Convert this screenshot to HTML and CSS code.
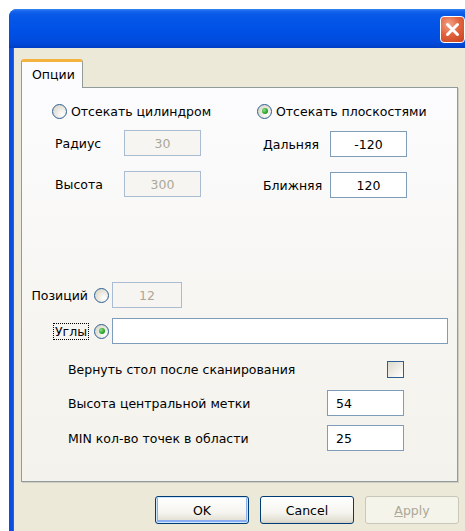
FILE: index.html
```html
<!DOCTYPE html>
<html lang="ru">
<head>
<meta charset="utf-8">
<title>Опции</title>
<link rel="stylesheet" href="styles.css">
</head>
<body>
<div class="window">
  <div class="titlebar">
    <div class="close-btn">
      <svg width="17" height="17" viewBox="0 0 17 17"><path d="M3.5 3.5 L13.5 13.5 M13.5 3.5 L3.5 13.5" stroke="#fff" stroke-width="3" stroke-linecap="round"/></svg>
    </div>
  </div>
  <div class="frame">
    <div class="tabs"><div class="tab">Опции</div></div>
    <div class="panel">
      <div class="clip">
        <div class="clip-col">
          <label class="radio-row"><span class="radio"></span>Отсекать цилиндром</label>
          <div class="field-row left-row"><span class="flabel">Радиус</span><span class="edit disabled center">30</span></div>
          <div class="field-row left-row"><span class="flabel">Высота</span><span class="edit disabled center">300</span></div>
        </div>
        <div class="clip-col">
          <label class="radio-row"><span class="radio checked"></span>Отсекать плоскостями</label>
          <div class="field-row right-row"><span class="flabel">Дальняя</span><span class="edit center">-120</span></div>
          <div class="field-row right-row"><span class="flabel">Ближняя</span><span class="edit center">120</span></div>
        </div>
      </div>

      <div class="mode">
        <span class="mlabel">Позиций</span><span class="radio"></span><span class="edit disabled center short">12</span>
        <span class="mlabel"><span class="focus">Углы</span></span><span class="radio checked"></span><span class="edit wide"></span>
      </div>

      <div class="opts">
        <div class="opt-row"><span>Вернуть стол после сканирования</span><span class="check"></span></div>
        <div class="opt-row"><span>Высота центральной метки</span><span class="edit num">54</span></div>
        <div class="opt-row"><span>MIN кол-во точек в области</span><span class="edit num">25</span></div>
      </div>
    </div>
    <div class="buttons">
      <button class="btn default">OK</button>
      <button class="btn">Cancel</button>
      <button class="btn off"><u>A</u>pply</button>
    </div>
  </div>
</div>
</body>
</html>
```

FILE: styles.css
```css
html, body {
  margin: 0;
  padding: 0;
  width: 465px;
  height: 531px;
  overflow: hidden;
  background: #ffffff;
  font-family: "DejaVu Sans", Verdana, sans-serif;
  font-size: 12.5px;
  color: #000;
}

.window {
  margin: 9px 0 0 9px;
  width: 472px;
  height: 540px;
  border-radius: 8px 8px 0 0;
  background: #0a4fe0;
  display: flex;
  flex-direction: column;
  overflow: hidden;
}

.titlebar {
  height: 39px;
  flex: none;
  position: relative;
  background: linear-gradient(to bottom,
    #3a86f2 0px, #1766ee 2px, #0a5ae6 5px, #0456e8 10px,
    #0050e6 22px, #004bdd 32px, #0046d4 36px, #003dc2 39px);
}

.close-btn {
  position: absolute;
  left: 431px;
  top: 7px;
  width: 25px;
  height: 27px;
  box-sizing: border-box;
  border: 1px solid #ffffff;
  border-radius: 4px;
  background: radial-gradient(circle at 35% 30%, #f2a489 0%, #e2643f 45%, #c63f1e 100%);
  display: flex;
  align-items: center;
  justify-content: center;
}

.frame {
  flex: 1;
  background: #ece9d8;
  border-left: 4px solid #0a4fe0;
  box-shadow: inset 1px 0 0 #1d63e6;
  padding: 11px 0 0 8px;
}

.tabs {
  display: flex;
  height: 28px;
}

.tab {
  width: 62px;
  box-sizing: border-box;
  border: 1px solid #919b9c;
  border-top: 3px solid #f4b33e;
  border-bottom: none;
  border-radius: 3px 3px 0 0;
  background: #fcfcfe;
  padding: 5px 0 0 10px;
  margin-bottom: -1px;
  position: relative;
  z-index: 1;
}

.panel {
  width: 437px;
  height: 395px;
  box-sizing: border-box;
  border: 1px solid #919b9c;
  box-shadow: 1px 1px 0 #d0cec3;
  background: linear-gradient(to bottom, #fcfcfe 0%, #f6f5f1 60%, #f3f2ec 100%);
  padding: 15px 0 0 0;
}

/* clipping mode columns */
.clip {
  display: flex;
}

.clip-col {
  display: flex;
  flex-direction: column;
}

.clip-col:first-child {
  margin-left: 30px;
  width: 205px;
}

.radio-row {
  display: flex;
  align-items: center;
  height: 16px;
  gap: 4px;
}

.radio {
  width: 15px;
  height: 15px;
  box-sizing: border-box;
  border-radius: 50%;
  border: 1px solid #2c5f92;
  background: radial-gradient(circle at 70% 70%, #ffffff 0%, #e6e4da 55%, #d4d1c3 100%);
  position: relative;
  flex: none;
}

.radio.checked::after {
  content: "";
  position: absolute;
  left: 3.5px;
  top: 3.5px;
  width: 6px;
  height: 6px;
  border-radius: 50%;
  background: radial-gradient(circle at 35% 35%, #8fe08f 0%, #2ea92e 55%, #157a15 100%);
}

.field-row {
  display: flex;
  align-items: center;
}

.left-row {
  padding-left: 3px;
}

.left-row:nth-child(2) { margin-top: 11px; }
.left-row:nth-child(3) { margin-top: 15px; }

.right-row {
  padding-left: 6px;
}

.right-row:nth-child(2) { margin-top: 12px; }
.right-row:nth-child(3) { margin-top: 15px; }

.flabel {
  width: 69px;
  flex: none;
}

.right-row .flabel {
  width: 67px;
}

.edit {
  display: flex;
  align-items: center;
  box-sizing: border-box;
  height: 26px;
  width: 77px;
  border: 1px solid #7f9db9;
  background: #ffffff;
  padding: 0 8px;
  flex: none;
}

.edit.center {
  justify-content: center;
  padding: 0;
}

.edit.disabled {
  border-color: #a9bcd2;
  background: #f6f5f1;
  color: #aca899;
}

/* positions / angles */
.mode {
  display: grid;
  grid-template-columns: 65px 15px 1fr;
  column-gap: 4px;
  row-gap: 10px;
  align-items: center;
  margin: 84px 0 0 2px;
}

.mode .radio {
  margin-left: 1px;
}

.mlabel {
  justify-self: end;
  margin-right: 1px;
}

.focus {
  outline: 1px dotted #000;
  outline-offset: 0;
  padding: 0 1px;
}

.edit.short {
  width: 70px;
}

.edit.wide {
  width: 336px;
}

/* extra options */
.opts {
  margin: 17px 0 0 46px;
  width: 336px;
  display: flex;
  flex-direction: column;
}

.opt-row {
  display: flex;
  align-items: center;
  justify-content: space-between;
  height: 26px;
}

.opt-row + .opt-row {
  margin-top: 9px;
}

.opt-row:first-child {
  height: 17px;
  margin-bottom: 3px;
}

.check {
  width: 17px;
  height: 17px;
  box-sizing: border-box;
  border: 1px solid #2c5f92;
  background: linear-gradient(135deg, #dcd9cc 0%, #f4f3ee 70%, #ffffff 100%);
}

.edit.num {
  padding-left: 8px;
}

/* dialog buttons */
.buttons {
  display: flex;
  gap: 11px;
  width: 438px;
  justify-content: flex-end;
  margin-top: 14px;
}

.btn {
  width: 94px;
  height: 28px;
  box-sizing: border-box;
  border: 1px solid #003c74;
  border-radius: 3px;
  background: linear-gradient(to bottom, #ffffff 0%, #f5f4ef 60%, #e3e0d4 90%, #d6d0c5 100%);
  font-family: inherit;
  font-size: 12.5px;
  color: #000;
  padding: 0;
}

.btn.default {
  box-shadow: inset 0 0 0 1px #cee7ff, inset 0 -1px 0 2px #89adf0;
}

.btn.off {
  border-color: #c9c7ba;
  background: #f5f4ea;
  color: #aca899;
}

.btn.off u {
  text-decoration-thickness: 1px;
}
```
